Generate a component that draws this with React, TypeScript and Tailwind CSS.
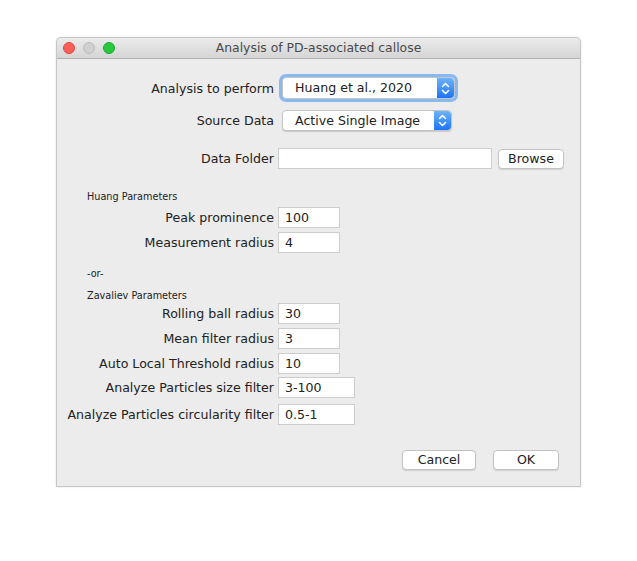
import React from 'react'

const font = { fontFamily: '"DejaVu Sans", "Liberation Sans", sans-serif' }

function Stepper() {
  return (
    <div className="w-[17px] h-full rounded-r-[4px] bg-gradient-to-b from-[#6cb3fa] to-[#1b73f6] flex items-center justify-center">
      <svg width="9" height="13" viewBox="0 0 9 13" fill="none" stroke="white" strokeWidth="1.6" strokeLinecap="round" strokeLinejoin="round">
        <path d="M1.5 4.5 L4.5 1.5 L7.5 4.5" />
        <path d="M1.5 8.5 L4.5 11.5 L7.5 8.5" />
      </svg>
    </div>
  )
}

function Select({ value, width, focused }: { value: string; width: string; focused?: boolean }) {
  return (
    <div
      className={`ml-[4px] flex h-full items-stretch rounded-[4px] bg-white border border-[#c5c5c5] shadow-[0_1px_1px_rgba(0,0,0,0.15)] ${width} ${
        focused ? 'ring-[3px] ring-[#8ab9f1]' : ''
      }`}
    >
      <div className="flex-1 pl-[12px] pt-[1px] flex items-center text-[12.6px] text-[#222]">{value}</div>
      <Stepper />
    </div>
  )
}

function Field({ value, width = 'w-[62px]' }: { value: string; width?: string }) {
  return (
    <div className={`h-full ${width} bg-white border border-[#cdcdcd] pl-[6px] pt-[1px] flex items-center text-[12.6px] text-[#222]`}>
      {value}
    </div>
  )
}

function Label({ text }: { text: string }) {
  return <div className="w-[217px] pt-[2px] text-right text-[12.6px] text-[#222] whitespace-nowrap">{text}</div>
}

function Row({ label, children, className = '' }: { label: string; children: React.ReactNode; className?: string }) {
  return (
    <div className={`flex items-center h-[21px] ${className}`}>
      <Label text={label} />
      <div className="ml-[4px] h-full flex items-center">{children}</div>
    </div>
  )
}

function Button({ label, width }: { label: string; width: string }) {
  return (
    <div className={`h-[20px] ${width} bg-white border border-[#c3c3c3] rounded-[4px] shadow-[0_1px_1px_rgba(0,0,0,0.12)] flex items-center justify-center pt-[1px] text-[12.6px] text-[#222]`}>
      {label}
    </div>
  )
}

export default function App() {
  return (
    <div className="w-[637px] h-[561px] bg-white pt-[37px] pl-[56px]" style={font}>
      <div className="w-[525px] h-[450px] bg-[#ececec] rounded-t-[5px] border border-[#c6c6c6] shadow-[0_0_2px_rgba(0,0,0,0.15)] flex flex-col">
        {/* Title bar */}
        <div className="relative h-[21px] rounded-t-[5px] bg-gradient-to-b from-[#ebebeb] to-[#d5d5d5] border-b border-[#b1b1b1] flex items-center">
          <div className="flex items-center gap-[8px] pl-[6px]">
            <span className="w-[12px] h-[12px] rounded-full bg-[#fc5f57] border border-[#e2463f]" />
            <span className="w-[12px] h-[12px] rounded-full bg-[#d0d0d0] border border-[#bdbdbd]" />
            <span className="w-[12px] h-[12px] rounded-full bg-[#29c73f] border border-[#14ae2c]" />
          </div>
          <div className="absolute inset-0 flex items-center justify-center pt-[1px] text-[12.4px] text-[#4a4a4a]">
            Analysis of PD-associated callose
          </div>
        </div>

        {/* Body */}
        <div className="flex flex-col">
          <div className="flex items-center h-[22px] mt-[18px]">
            <Label text="Analysis to perform" />
            <div className="ml-[4px] h-full">
              <Select value="Huang et al., 2020" width="w-[173px]" focused />
            </div>
          </div>
          <div className="flex items-center h-[21px] mt-[11px]">
            <Label text="Source Data" />
            <div className="ml-[4px] h-full">
              <Select value="Active Single Image" width="w-[170px]" />
            </div>
          </div>
          <Row label="Data Folder" className="mt-[17px]">
            <Field value="" width="w-[214px]" />
            <div className="ml-[6px]">
              <Button label="Browse" width="w-[66px]" />
            </div>
          </Row>

          <div className="mt-[21px] h-[12px] pl-[30px] pt-[1px] text-[9.7px] leading-[12px] text-[#222]">Huang Parameters</div>
          <Row label="Peak prominence" className="mt-[5px]">
            <Field value="100" />
          </Row>
          <Row label="Measurement radius" className="mt-[4px]">
            <Field value="4" />
          </Row>

          <div className="mt-[14px] h-[12px] pl-[30px] pt-[1px] text-[9.7px] leading-[12px] text-[#222]">-or-</div>
          <div className="mt-[10px] h-[12px] pl-[30px] pt-[1px] text-[9.7px] leading-[12px] text-[#222]">Zavaliev Parameters</div>
          <Row label="Rolling ball radius" className="mt-[2px]">
            <Field value="30" />
          </Row>
          <Row label="Mean filter radius" className="mt-[4px]">
            <Field value="3" />
          </Row>
          <Row label="Auto Local Threshold radius" className="mt-[4px]">
            <Field value="10" />
          </Row>
          <Row label="Analyze Particles size filter" className="mt-[3px]">
            <Field value="3-100" width="w-[77px]" />
          </Row>
          <Row label="Analyze Particles circularity filter" className="mt-[6px]">
            <Field value="0.5-1" width="w-[77px]" />
          </Row>

          <div className="mt-[25px] flex pl-[345px] gap-[17px]">
            <Button label="Cancel" width="w-[74px]" />
            <Button label="OK" width="w-[66px]" />
          </div>
        </div>
      </div>
    </div>
  )
}
